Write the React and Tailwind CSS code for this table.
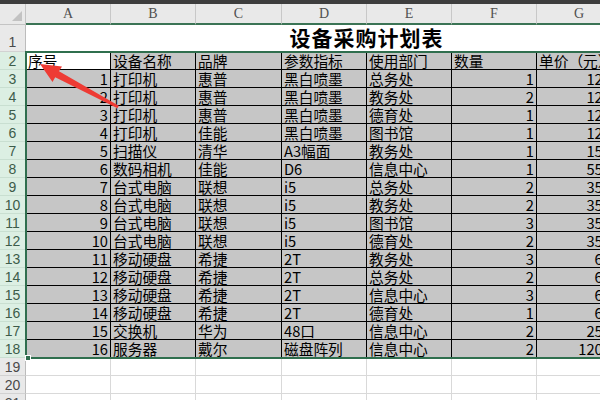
const COLS = ["A", "B", "C", "D", "E", "F", "G"];
const WIDTHS = ["w-[85px]", "w-[85px]", "w-[86px]", "w-[85px]", "w-[85px]", "w-[85px]", "w-[85px]"];

const HEAD = ["序号", "设备名称", "品牌", "参数指标", "使用部门", "数量", "单价（元）"];

const ROWS = [
  [1, "打印机", "惠普", "黑白喷墨", "总务处", 1, 1200],
  [2, "打印机", "惠普", "黑白喷墨", "教务处", 2, 1200],
  [3, "打印机", "惠普", "黑白喷墨", "德育处", 1, 1200],
  [4, "打印机", "佳能", "黑白喷墨", "图书馆", 1, 1200],
  [5, "扫描仪", "清华", "A3幅面", "教务处", 1, 1500],
  [6, "数码相机", "佳能", "D6", "信息中心", 1, 5500],
  [7, "台式电脑", "联想", "i5", "总务处", 2, 3500],
  [8, "台式电脑", "联想", "i5", "教务处", 2, 3500],
  [9, "台式电脑", "联想", "i5", "图书馆", 3, 3500],
  [10, "台式电脑", "联想", "i5", "德育处", 2, 3500],
  [11, "移动硬盘", "希捷", "2T", "教务处", 3, 600],
  [12, "移动硬盘", "希捷", "2T", "总务处", 2, 600],
  [13, "移动硬盘", "希捷", "2T", "信息中心", 3, 600],
  [14, "移动硬盘", "希捷", "2T", "德育处", 1, 600],
  [15, "交换机", "华为", "48口", "信息中心", 2, 2500],
  [16, "服务器", "戴尔", "磁盘阵列", "信息中心", 2, 12000],
];

function RowHead({ n, selected, tall }) {
  return (
    <div
      className={`w-[26px] shrink-0 flex justify-center border-r border-b ${
        tall ? "items-end pb-[1px]" : "items-center"
      } ${
        selected
          ? "bg-[#dcefe3] border-b-[#c9dfd1] border-r-[#bcbcbc] text-[#3d5c4a]"
          : "bg-[#e9e9e9] border-b-[#d2d2d2] border-r-[#bcbcbc] text-[#4a4a4a]"
      } text-[14px] leading-[16px]`}
      style={{ fontFamily: '"Liberation Sans", sans-serif' }}
    >
      {n}
    </div>
  );
}

function DataRow({ n, cells, rightCols }) {
  return (
    <div className="flex h-[18px]">
      <RowHead n={n} selected />
      {cells.map((c, i) => (
        <div
          key={i}
          className={`${WIDTHS[i]} shrink-0 border-r border-b border-black whitespace-nowrap px-[2px] text-[14.7px] leading-[17px] text-black ${
            rightCols.includes(i) ? "text-right" : "text-left"
          } ${n === 2 && i === 0 ? "bg-white" : "bg-[#c6c6c6]"}`}
        >
          {c}
        </div>
      ))}
    </div>
  );
}

function EmptyRow({ n }) {
  return (
    <div className="flex h-[18px]">
      <RowHead n={n} />
      {WIDTHS.map((w, i) => (
        <div key={i} className={`${w} shrink-0 border-r border-b border-[#d9d9d9] bg-white`} />
      ))}
    </div>
  );
}

function Arrow() {
  return (
    <svg className="absolute left-0 top-0 pointer-events-none" width="600" height="400">
      <polygon
        points="40,64 62,66.5 59,71.2 118.8,105.8 117.4,108.2 55.2,77.2 52.5,82"
        fill="#ee3b34"
      />
    </svg>
  );
}

export default function App() {
  return (
    <div
      className="relative w-[600px] h-[400px] overflow-hidden bg-white"
      style={{ fontFamily: '"Noto Sans CJK SC", "Noto Sans", sans-serif' }}
    >
      <div className="h-[4px] bg-[#3d3d3d]" />

      <div className="flex h-[21px] bg-[#e9e9e9]">
        <div className="w-[26px] shrink-0 relative border-r border-b border-[#c4c4c4]">
          <div className="absolute right-[3px] bottom-[3px] w-0 h-0 border-l-[10px] border-l-transparent border-b-[10px] border-b-[#c2c2c2]" />
        </div>
        {COLS.map((c, i) => (
          <div
            key={c}
            className={`${WIDTHS[i]} shrink-0 flex items-center justify-center border-r border-[#c8c8c8] border-b-2 border-b-[#3b7455] text-[14px] text-[#505050]`}
            style={{ fontFamily: '"Liberation Serif", serif' }}
          >
            {c}
          </div>
        ))}
      </div>

      <div className="flex h-[27px]">
        <RowHead n={1} tall />
        <div className="w-[681px] shrink-0 flex items-end justify-center pb-[2px] border-b border-[#d9d9d9]">
          <span className="text-[21px] leading-[24px] font-bold text-black tracking-[1px]">设备采购计划表</span>
        </div>
      </div>

      <DataRow n={2} cells={HEAD} rightCols={[]} />
      {ROWS.map((r, i) => (
        <DataRow key={i} n={i + 3} cells={r} rightCols={[0, 5, 6]} />
      ))}

      <EmptyRow n={19} />
      <EmptyRow n={20} />
      <EmptyRow n={21} />

      <div className="absolute left-[25px] top-[51px] w-[600px] h-[308px] border-2 border-[#2f6f4e]" />
      <div className="absolute left-[25px] top-[355px] w-[6px] h-[6px] bg-[#2f6f4e] border border-white" />

      <Arrow />
    </div>
  );
}
